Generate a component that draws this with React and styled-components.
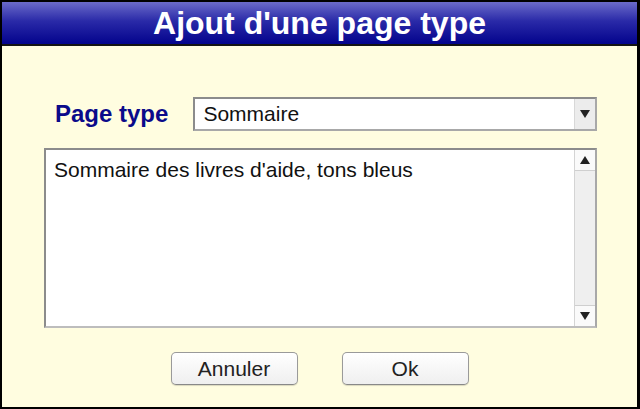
import React from "react";
import styled, { createGlobalStyle } from "styled-components";

const GlobalStyle = createGlobalStyle`
  html, body {
    margin: 0;
    padding: 0;
    background: #000;
  }
  body {
    font-family: "Liberation Sans", Arial, sans-serif;
  }
`;

const Window = styled.div`
  width: 640px;
  height: 409px;
  box-sizing: border-box;
  border: 2px solid #000;
  border-right-width: 3px;
  background: #fffde0;
  display: flex;
  flex-direction: column;
`;

const TitleBar = styled.div`
  height: 42px;
  flex-shrink: 0;
  border-bottom: 2px solid #141414;
  background: linear-gradient(to bottom, #6b6bc9 0%, #2a2aa8 45%, #03038c 100%);
  color: #fff;
  font-weight: bold;
  font-size: 32px;
  display: flex;
  align-items: center;
  justify-content: center;
`;

const Body = styled.div`
  flex: 1;
  display: flex;
  flex-direction: column;
  padding: 51px 40px 0 42px;
`;

const Row = styled.div`
  display: flex;
  align-items: center;
  gap: 25px;
  padding-left: 11px;
`;

const Label = styled.span`
  color: #0a0a8a;
  font-weight: bold;
  font-size: 24px;
`;

const Select = styled.div`
  flex: 1;
  height: 34px;
  box-sizing: border-box;
  border: 2px solid;
  border-color: #8c8c8c #a8a8a8 #a8a8a8 #8c8c8c;
  background: #fff;
  display: flex;
  align-items: stretch;
`;

const SelectValue = styled.span`
  flex: 1;
  font-size: 21px;
  color: #111;
  padding-left: 8px;
  display: flex;
  align-items: center;
`;

const ArrowBox = styled.div`
  width: 20px;
  background: #ececec;
  border-left: 1px solid #d8d8d8;
  display: flex;
  align-items: center;
  justify-content: center;
`;

const Triangle = styled.span`
  width: 0;
  height: 0;
  border-left: 5px solid transparent;
  border-right: 5px solid transparent;
  ${(p) =>
    p.up
      ? "border-bottom: 8px solid #222;"
      : "border-top: 8px solid #222;"}
`;

const TextArea = styled.div`
  margin-top: 17px;
  height: 180px;
  box-sizing: border-box;
  border: 2px solid;
  border-color: #8c8c8c #a8a8a8 #bdbdbd #8c8c8c;
  background: #fff;
  display: flex;
`;

const TextContent = styled.div`
  flex: 1;
  font-size: 21px;
  color: #111;
  padding: 8px 8px;
`;

const ScrollBar = styled.div`
  width: 20px;
  display: flex;
  flex-direction: column;
  background: #f2f2f2;
  border-left: 1px solid #d4d4d4;
`;

const ScrollButton = styled.div`
  height: 20px;
  flex-shrink: 0;
  background: #fafafa;
  display: flex;
  align-items: center;
  justify-content: center;
  border-${(p) => (p.up ? "bottom" : "top")}: 1px solid #cfcfcf;
`;

const Track = styled.div`
  flex: 1;
  background: #efefef;
`;

const Buttons = styled.div`
  margin-top: 24px;
  display: flex;
  justify-content: center;
  gap: 44px;
  padding-right: 2px;
`;

const Button = styled.button`
  width: 127px;
  height: 33px;
  box-sizing: border-box;
  border: 1px solid #9a9a9a;
  border-bottom-color: #888;
  border-radius: 5px;
  background: linear-gradient(to bottom, #ffffff, #efefef);
  box-shadow: 0 1px 1px rgba(0, 0, 0, 0.15);
  font-family: "Liberation Sans", Arial, sans-serif;
  font-size: 21px;
  color: #222;
  padding: 0;
`;

export default function App() {
  return (
    <>
      <GlobalStyle />
      <Window>
        <TitleBar>Ajout d'une page type</TitleBar>
        <Body>
          <Row>
            <Label>Page type</Label>
            <Select>
              <SelectValue>Sommaire</SelectValue>
              <ArrowBox>
                <Triangle />
              </ArrowBox>
            </Select>
          </Row>
          <TextArea>
            <TextContent>Sommaire des livres d'aide, tons bleus</TextContent>
            <ScrollBar>
              <ScrollButton up>
                <Triangle up />
              </ScrollButton>
              <Track />
              <ScrollButton>
                <Triangle />
              </ScrollButton>
            </ScrollBar>
          </TextArea>
          <Buttons>
            <Button>Annuler</Button>
            <Button>Ok</Button>
          </Buttons>
        </Body>
      </Window>
    </>
  );
}
